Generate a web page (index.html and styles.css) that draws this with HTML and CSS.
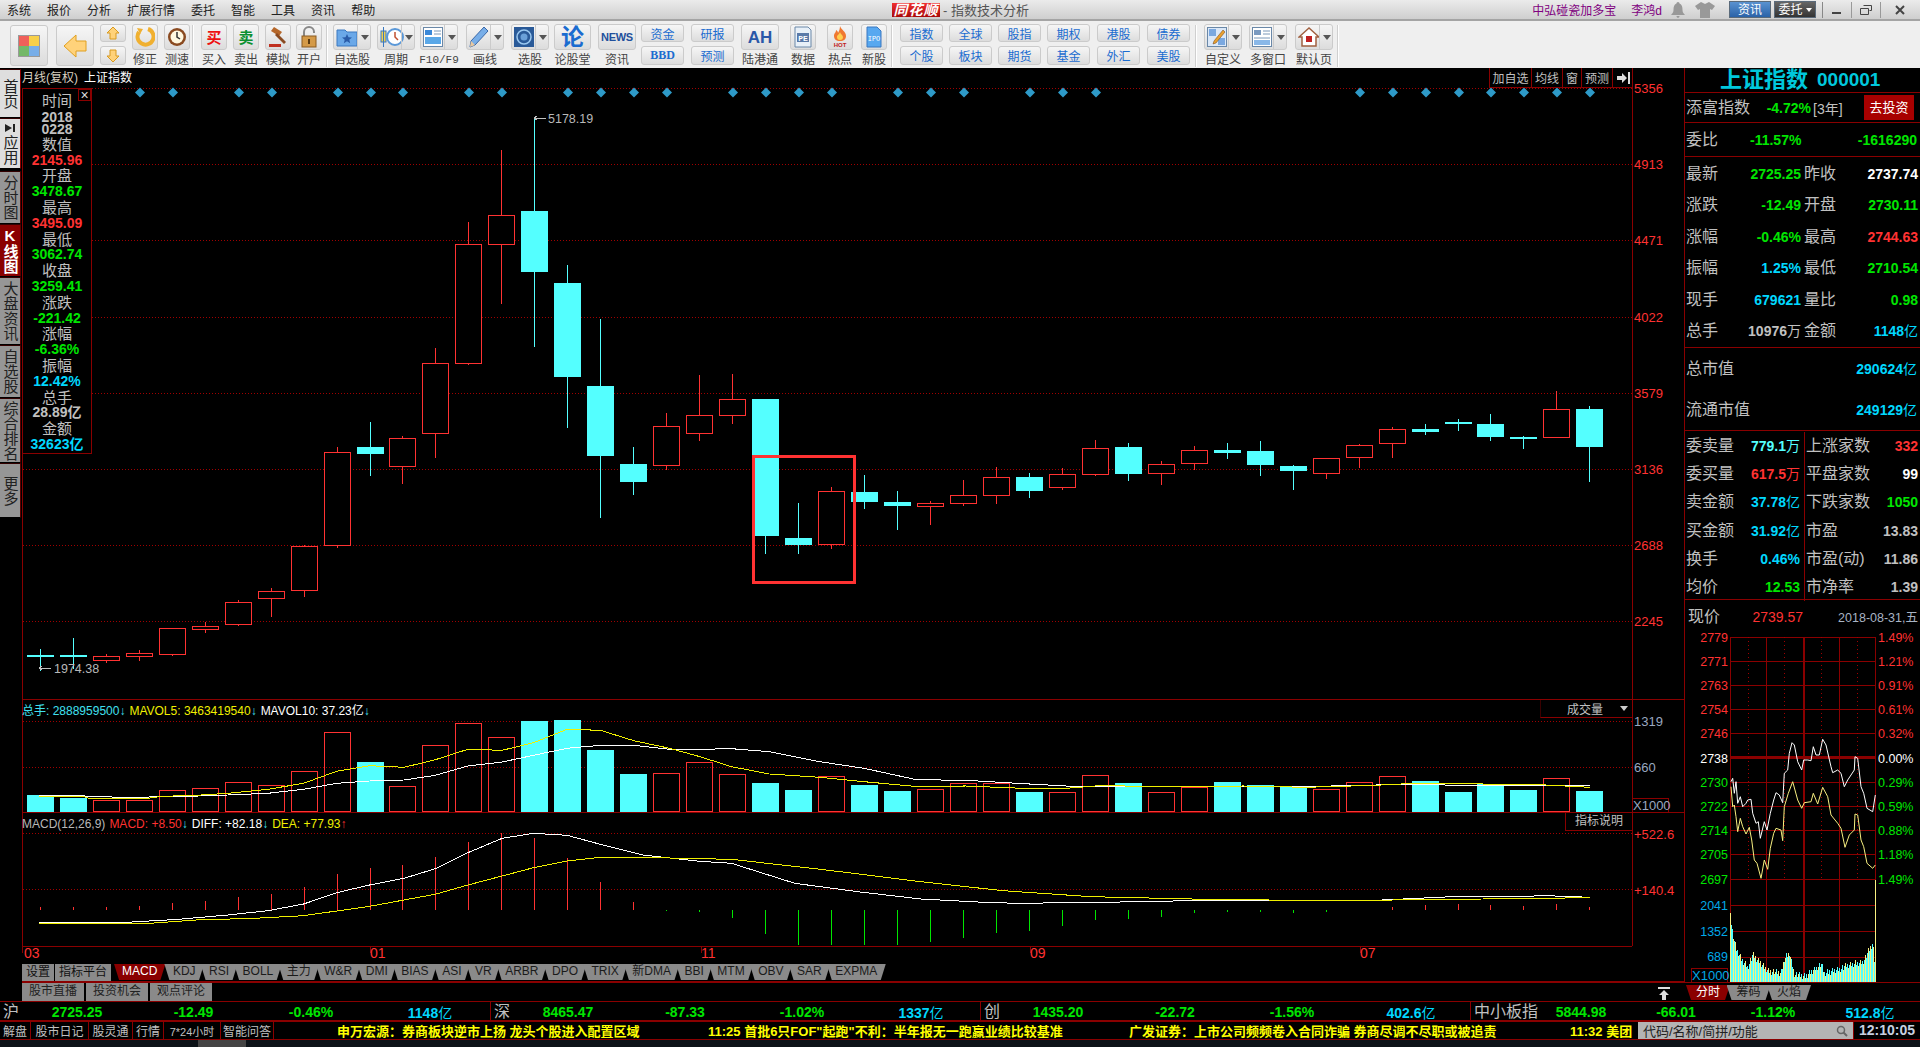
FILE: index.html
```html
<!DOCTYPE html>
<html lang="zh-CN">
<head>
<meta charset="utf-8">
<title>同花顺 - 指数技术分析</title>
<link rel="stylesheet" href="styles.css">
</head>
<body>
<div class="app">
  <header class="titlebar">
    <nav class="menu"><span>系统</span><span>报价</span><span>分析</span><span>扩展行情</span><span>委托</span><span>智能</span><span>工具</span><span>资讯</span><span>帮助</span></nav>
    <div class="brand"><span class="brand-logo">同花顺</span><span class="brand-title">- 指数技术分析</span></div>
    <div class="title-right">
      <span class="purple">中弘碰瓷加多宝</span><span class="purple user">李鸿d</span>
      <svg class="bell" width="14" height="16" viewBox="0 0 14 16"><path d="M7 0c1 0 1.500.8 1.500 1.600C11 2.500 11.500 5 11.500 8c0 2 1 3.500 2.500 5H0c1.500-1.500 2.500-3 2.500-5 0-3 .5-5.500 3-6.400C5.500.8 6 0 7 0zM5.500 14h3c0 1-.7 1.800-1.500 1.800S5.500 15 5.500 14z" fill="#999"/></svg>
      <svg class="shirt" width="20" height="16" viewBox="0 0 20 16"><path d="M6 0l4 2 4-2 6 4-3 4-2-1v9H5V7L3 8 0 4z" fill="#999"/></svg>
      <span class="pill pill-blue">资讯</span><span class="pill pill-dark">委托<i class="caret"></i></span>
      <div class="winbtns">
        <span class="win"><svg width="10" height="10" viewBox="0 0 10 10"><rect x="0" y="7" width="9" height="2" fill="#444"/></svg></span>
        <span class="win"><svg width="12" height="10" viewBox="0 0 12 10"><path d="M3.500.5h8v5h-2M.5 3.500h8v6h-8z" fill="none" stroke="#444"/></svg></span>
        <span class="win win-x"><svg width="10" height="10" viewBox="0 0 10 10"><path d="M1 1l8 8M9 1l-8 8" stroke="#444" stroke-width="2"/></svg></span>
      </div>
    </div>
  </header>

  <div class="toolbar">
    <div class="btn w38 tall ml0"><svg width="22" height="22" viewBox="0 0 22 22"><rect x="1" y="1" width="10" height="10" fill="#f0605a"/><rect x="11" y="1" width="10" height="10" fill="#f8d048"/><rect x="1" y="11" width="10" height="10" fill="#74b868"/><rect x="11" y="11" width="10" height="10" fill="#78aee8"/><rect x=".5" y=".5" width="21" height="21" fill="none" stroke="#999"/></svg></div>
    <div class="btn w38 tall ml8"><svg width="24" height="24" viewBox="0 0 24 24"><path d="M1 12L13 1v6h10v10H13v6z" fill="#ffd27a" stroke="#e0a020"/></svg></div>
    <div class="stack w26 ml6">
      <div class="btn half"><svg width="14" height="14" viewBox="0 0 14 14"><path d="M7 1l6 6H10v6H4V7H1z" fill="#ffd27a" stroke="#d89a20"/></svg></div>
      <div class="btn half"><svg width="14" height="14" viewBox="0 0 14 14"><path d="M7 13L1 7h3V1h6v6h3z" fill="#ffd27a" stroke="#d89a20"/></svg></div>
    </div>
    <div class="tool w26 ml6"><div class="btn icon"><svg width="20" height="20" viewBox="0 0 20 20"><path d="M13 2a8 8 0 1 1-9 3" fill="none" stroke="#f0b030" stroke-width="4"/><path d="M2 1l6 1-3 5z" fill="#f0b030"/></svg></div><span>修正</span></div>
    <div class="tool w26 ml6"><div class="btn icon"><svg width="20" height="20" viewBox="0 0 20 20"><circle cx="10" cy="10" r="9" fill="#8a4a20"/><circle cx="10" cy="10" r="6.500" fill="#fff8e0"/><path d="M10 5v5l3 2" fill="none" stroke="#333" stroke-width="1.500"/></svg></div><span>测速</span></div>
    <div class="sep ml2"></div>
    <div class="tool w26 ml7"><div class="btn icon glyph buy">买</div><span>买入</span></div>
    <div class="tool w26 ml6"><div class="btn icon glyph sell">卖</div><span>卖出</span></div>
    <div class="tool w26 ml6"><div class="btn icon"><svg width="20" height="22" viewBox="0 0 20 22"><path d="M6 1l8 5-3 4-8-5z" fill="#b5672a"/><path d="M9 7l9 9-2 2-9-9z" fill="#8a4a20"/><rect x="1" y="18" width="12" height="3" fill="#c03020"/></svg></div><span>模拟</span></div>
    <div class="tool w26 ml5"><div class="btn icon"><svg width="18" height="22" viewBox="0 0 18 22"><path d="M4 10V6a5 5 0 0 1 10 0v1" fill="none" stroke="#888" stroke-width="2"/><rect x="2" y="10" width="14" height="11" fill="#d49a48" stroke="#8a5a20"/><rect x="8" y="13" width="2" height="5" fill="#5a3a10"/></svg></div><span>开户</span></div>
    <div class="sep ml4"></div>
    <div class="tool w38 ml5"><div class="btn icon split"><svg width="22" height="20" viewBox="0 0 22 20"><path d="M1 3h8l2 2h10v14H1z" fill="#6aa8e8" stroke="#3a78c0"/><path d="M11 7l1.500 3.200 3.500.3-2.700 2.300.9 3.400-3.200-1.900-3.200 1.900.9-3.400L6 10.500l3.500-.3z" fill="#2a5ca8"/></svg><i class="drop"></i></div><span>自选股</span></div>
    <div class="tool w38 ml6"><div class="btn icon split"><svg width="24" height="22" viewBox="0 0 24 22"><rect x="1" y="5" width="5" height="11" fill="#f0d050" stroke="#3a78c0"/><path d="M3.500 1v20" stroke="#3a78c0"/><circle cx="15" cy="11" r="8" fill="#fff" stroke="#5a98d8" stroke-width="2"/><path d="M15 6v5l3 3" fill="none" stroke="#c05030" stroke-width="1.500"/></svg><i class="drop"></i></div><span>周期</span></div>
    <div class="tool w38 ml5"><div class="btn icon split"><svg width="20" height="20" viewBox="0 0 20 20"><rect x=".5" y=".5" width="19" height="19" fill="#fff" stroke="#6a88a8"/><rect x="2" y="3" width="7" height="5" fill="#3a88d8"/><path d="M11 4h7M11 7h7" stroke="#7a98b8"/><rect x="2" y="10" width="16" height="7" fill="#5aa8e8"/></svg><i class="drop"></i></div><span class="mono">F10/F9</span></div>
    <div class="tool w38 ml8"><div class="btn icon split"><svg width="20" height="22" viewBox="0 0 20 22"><path d="M15 1l4 4L6 19l-5 2 1-6z" fill="#78aee8" stroke="#3a68a8"/><path d="M1 21l1-6 4 4z" fill="#e8c8a0"/></svg><i class="drop"></i></div><span>画线</span></div>
    <div class="tool w38 ml7"><div class="btn icon split"><svg width="20" height="20" viewBox="0 0 20 20"><rect width="20" height="20" fill="#2a5a98"/><circle cx="10" cy="10" r="7" fill="none" stroke="#9ac8f0" stroke-width="1.500"/><circle cx="10" cy="10" r="3.500" fill="#6aa0d8"/></svg><i class="drop"></i></div><span>选股</span></div>
    <div class="tool w37 ml5"><div class="btn icon glyph lun">论</div><span>论股堂</span></div>
    <div class="tool w38 ml7"><div class="btn icon glyph news">NEWS</div><span>资讯</span></div>
    <div class="stack w43 ml5"><div class="btn half link">资金</div><div class="btn half link bbd">BBD</div></div>
    <div class="stack w43 ml7"><div class="btn half link">研报</div><div class="btn half link">预测</div></div>
    <div class="tool w38 ml7"><div class="btn icon glyph ah">AH</div><span>陆港通</span></div>
    <div class="tool w26 ml11"><div class="btn icon"><svg width="20" height="22" viewBox="0 0 20 22"><path d="M2 1h13l3 3v17H2z" fill="#e8f0f8" stroke="#6a88a8"/><rect x="4" y="7" width="12" height="9" fill="#5a7aa8"/><text x="10" y="15" class="pe">PE</text></svg></div><span>数据</span></div>
    <div class="tool w26 ml11"><div class="btn icon"><svg width="20" height="22" viewBox="0 0 20 22"><path d="M10 0c1 4 6 5 6 10 0 3-2 5-6 5s-6-2-6-5c0-3 2-3 2-6 1 1 2 1 2 3 1-2 2-4 2-7z" fill="#f07830"/><path d="M10 6c0 2 3 3 3 5s-1 3-3 3-3-1-3-3 2-2 3-5z" fill="#ffd050"/><text x="10" y="21" class="hot">HOT</text></svg></div><span>热点</span></div>
    <div class="tool w26 ml8"><div class="btn icon"><svg width="16" height="22" viewBox="0 0 16 22"><path d="M1 1h10l4 4v16H1z" fill="#58a8f0" stroke="#3a78c0"/><text x="8" y="15" class="ipo">IPO</text></svg></div><span>新股</span></div>
    <div class="sep ml4"></div>
    <div class="stack w43 ml7"><div class="btn half link">指数</div><div class="btn half link">个股</div></div>
    <div class="stack w43 ml6"><div class="btn half link">全球</div><div class="btn half link">板块</div></div>
    <div class="stack w43 ml6"><div class="btn half link">股指</div><div class="btn half link">期货</div></div>
    <div class="stack w43 ml6"><div class="btn half link">期权</div><div class="btn half link">基金</div></div>
    <div class="stack w43 ml7"><div class="btn half link">港股</div><div class="btn half link">外汇</div></div>
    <div class="stack w43 ml7"><div class="btn half link">债券</div><div class="btn half link">美股</div></div>
    <div class="sep ml5"></div>
    <div class="tool w38 ml7"><div class="btn icon split"><svg width="20" height="20" viewBox="0 0 20 20"><rect x=".5" y=".5" width="19" height="19" fill="#dbe8f8" stroke="#6a88a8"/><rect x="2" y="2" width="7" height="7" fill="#7aa8e0"/><rect x="11" y="11" width="7" height="7" fill="#7aa8e0"/><path d="M16 3l2 2-9 11-3 1 1-3z" fill="#e8a030" stroke="#704010" stroke-width=".5"/></svg><i class="drop"></i></div><span>自定义</span></div>
    <div class="tool w38 ml7"><div class="btn icon split"><svg width="20" height="20" viewBox="0 0 20 20"><rect x=".5" y=".5" width="19" height="19" fill="#fff" stroke="#6a88a8"/><rect x="2" y="3" width="7" height="5" fill="#7a9ac0"/><path d="M11 4h7M11 7h7M2 11h16" stroke="#7a98b8"/><rect x="2" y="13" width="16" height="5" fill="#8ab8e8"/></svg><i class="drop"></i></div><span>多窗口</span></div>
    <div class="tool w38 ml8"><div class="btn icon split"><svg width="22" height="20" viewBox="0 0 22 20"><path d="M11 1L1 10h3v9h14v-9h3z" fill="#fff" stroke="#a06040" stroke-width="1.500"/><rect x="8" y="9" width="6" height="6" fill="#c02020"/></svg><i class="drop"></i></div><span>默认页</span></div>
    <div class="sep ml4"></div>
  </div>

  <main class="main">
    <aside class="rail">
      <div class="rail-btn light h49">首页</div>
      <div class="rail-btn light h51"><svg class="rail-icon" width="11" height="10" viewBox="0 0 11 10"><path d="M0 1l7 4-7 4zM8 1h2v8H8z" fill="#222"/></svg>应用</div>
      <div class="rail-btn h53 gap2">分时图</div>
      <div class="rail-btn active h53">K线图</div>
      <div class="rail-btn h68">大盘资讯</div>
      <div class="rail-btn h53">自选股</div>
      <div class="rail-btn h65">综合排名</div>
      <div class="rail-btn h55">更多</div>
    </aside>

    <section class="chart-col">
      <div class="canvas">
        <svg class="chart" width="1662" height="894" viewBox="22 68 1662 894" xmlns="http://www.w3.org/2000/svg">
          <g id="grid"></g>
          <g id="volume"></g>
          <g id="macd"></g>
          <g id="candles"></g>
          <g id="diamonds"></g>
          <rect class="highlight" x="753.500" y="456.500" width="101" height="126"/>
          <path class="peak" d="M534 118h12M537 116l-3 2 3 2M39 668h12M42 666l-3 2 3 2"/>
          <text class="t-gray" x="548" y="123">5178.19</text>
          <text class="t-gray" x="54" y="673">1974.38</text>
          <text class="cap" x="22" y="82"><tspan class="t-soft">月线(复权)</tspan><tspan class="t-white" dx="6">上证指数</tspan></text>

          <text class="ax" x="1634" y="93">5356</text><text class="ax" x="1634" y="169">4913</text><text class="ax" x="1634" y="245">4471</text><text class="ax" x="1634" y="322">4022</text><text class="ax" x="1634" y="398">3579</text><text class="ax" x="1634" y="474">3136</text><text class="ax" x="1634" y="550">2688</text><text class="ax" x="1634" y="626">2245</text>
          <text class="ax ax-blue" x="1634" y="726">1319</text><text class="ax ax-blue" x="1634" y="772">660</text>
          <text class="ax" x="1634" y="839">+522.6</text><text class="ax" x="1634" y="895">+140.4</text>

          <text class="leg" x="22" y="715"><tspan class="t-cyan">总手: 2888959500</tspan><tspan class="t-cyan">↓</tspan><tspan class="t-yellow" dx="4">MAVOL5: 3463419540</tspan><tspan class="t-cyan">↓</tspan><tspan class="t-white" dx="4">MAVOL10: 37.23亿</tspan><tspan class="t-cyan">↓</tspan></text>
          <text class="leg" x="22" y="828"><tspan class="t-gray">MACD(12,26,9)</tspan><tspan class="t-red" dx="4">MACD: +8.50</tspan><tspan class="t-cyan">↓</tspan><tspan class="t-white" dx="4">DIFF: +82.18</tspan><tspan class="t-cyan">↓</tspan><tspan class="t-yellow" dx="4">DEA: +77.93</tspan><tspan class="t-red">↑</tspan></text>

          <text class="xl" x="24" y="958">03</text><text class="xl" x="370" y="958">01</text><text class="xl" x="701" y="958">11</text><text class="xl" x="1030" y="958">09</text><text class="xl" x="1360" y="958">07</text>
        </svg>

        <div class="chart-tools"><span class="ct w42">加自选</span><span class="ct w31">均线</span><span class="ct w19">窗</span><span class="ct w31">预测</span><span class="ct w20"><svg width="13" height="12" viewBox="0 0 13 12"><path d="M0 4h5V1l5 5-5 5V8H0zM11 0h2v12h-2z" fill="#ddd"/></svg></span></div>

        <div class="info-box">
          <span class="info-x">×</span>
          <span class="il">时间</span><b class="iv iv-year gy">2018</b><b class="iv iv-tight gy">0228</b>
          <span class="il">数值</span><b class="iv r">2145.96</b>
          <span class="il">开盘</span><b class="iv g">3478.67</b>
          <span class="il">最高</span><b class="iv r">3495.09</b>
          <span class="il">最低</span><b class="iv g">3062.74</b>
          <span class="il">收盘</span><b class="iv g">3259.41</b>
          <span class="il">涨跌</span><b class="iv g">-221.42</b>
          <span class="il">涨幅</span><b class="iv g">-6.36%</b>
          <span class="il">振幅</span><b class="iv c">12.42%</b>
          <span class="il">总手</span><b class="iv gy">28.89亿</b>
          <span class="il">金额</span><b class="iv c">32623亿</b>
        </div>

        <div class="vol-select">成交量<i class="tri"></i></div>
        <div class="x1000 x1000-main">X1000</div>
        <div class="ind-help">指标说明</div>
      </div>

      <div class="tabs">
        <span class="flat">设置</span><span class="flat">指标平台</span>
        <span class="tab on first">MACD</span><span class="tab">KDJ</span><span class="tab">RSI</span><span class="tab">BOLL</span><span class="tab">主力</span><span class="tab">W&amp;R</span><span class="tab">DMI</span><span class="tab">BIAS</span><span class="tab">ASI</span><span class="tab">VR</span><span class="tab">ARBR</span><span class="tab">DPO</span><span class="tab">TRIX</span><span class="tab">新DMA</span><span class="tab">BBI</span><span class="tab">MTM</span><span class="tab">OBV</span><span class="tab">SAR</span><span class="tab">EXPMA</span>
      </div>
    </section>

    <aside class="side">
      <h1 class="side-title"><span>上证指数</span><b>000001</b></h1>
      <div class="sec tf">
        <span class="lbl">添富指数</span><b class="g tf-val">-4.72%</b><span class="tf-yr">[3年]</span><span class="invest">去投资</span>
      </div>
      <div class="sec wb"><span class="lbl">委比</span><b class="g wb-a">-11.57%</b><b class="g wb-b">-1616290</b></div>
      <div class="sec quad">
        <div class="cell"><span class="lbl">最新</span><b class="g">2725.25</b></div><div class="cell"><span class="lbl">昨收</span><b class="w">2737.74</b></div>
        <div class="cell"><span class="lbl">涨跌</span><b class="g">-12.49</b></div><div class="cell"><span class="lbl">开盘</span><b class="g">2730.11</b></div>
        <div class="cell"><span class="lbl">涨幅</span><b class="g">-0.46%</b></div><div class="cell"><span class="lbl">最高</span><b class="r">2744.63</b></div>
        <div class="cell"><span class="lbl">振幅</span><b class="c">1.25%</b></div><div class="cell"><span class="lbl">最低</span><b class="g">2710.54</b></div>
        <div class="cell"><span class="lbl">现手</span><b class="c">679621</b></div><div class="cell"><span class="lbl">量比</span><b class="g">0.98</b></div>
        <div class="cell"><span class="lbl">总手</span><b class="gy">10976<i>万</i></b></div><div class="cell"><span class="lbl">金额</span><b class="c">1148<i>亿</i></b></div>
      </div>
      <div class="sec caps">
        <div class="capr"><span class="lbl">总市值</span><b class="c">290624<i>亿</i></b></div>
        <div class="capr"><span class="lbl">流通市值</span><b class="c">249129<i>亿</i></b></div>
      </div>
      <div class="sec sgrid">
        <div class="cell"><span class="lbl">委卖量</span><b class="lc">779.1<i>万</i></b></div><div class="cell bl"><span class="lbl">上涨家数</span><b class="r">332</b></div>
        <div class="cell"><span class="lbl">委买量</span><b class="r">617.5<i>万</i></b></div><div class="cell bl"><span class="lbl">平盘家数</span><b class="w">99</b></div>
        <div class="cell"><span class="lbl">卖金额</span><b class="c">37.78<i>亿</i></b></div><div class="cell bl"><span class="lbl">下跌家数</span><b class="g">1050</b></div>
        <div class="cell"><span class="lbl">买金额</span><b class="c">31.92<i>亿</i></b></div><div class="cell bl"><span class="lbl">市盈</span><b class="gy">13.83</b></div>
        <div class="cell"><span class="lbl">换手</span><b class="c">0.46%</b></div><div class="cell bl"><span class="lbl">市盈(动)</span><b class="gy">11.86</b></div>
        <div class="cell"><span class="lbl">均价</span><b class="g">12.53</b></div><div class="cell bl"><span class="lbl">市净率</span><b class="gy">1.39</b></div>
      </div>
      <div class="now"><span class="lbl">现价</span><span class="now-v">2739.57</span><span class="now-d">2018-08-31,五</span></div>
      <svg class="mini" width="236" height="353" viewBox="1684 630 236 353" xmlns="http://www.w3.org/2000/svg">
        <g id="minigrid"></g>
        <g id="minivol"></g>
        <g id="minilines"></g>
        <g class="ml-text">
          <text class="mr" x="1727" y="642">2779</text><text class="mr" x="1727" y="666">2771</text><text class="mr" x="1727" y="690">2763</text><text class="mr" x="1727" y="714">2754</text><text class="mr" x="1727" y="738">2746</text><text class="mw" x="1727" y="763">2738</text><text class="mg" x="1727" y="787">2730</text><text class="mg" x="1727" y="811">2722</text><text class="mg" x="1727" y="835">2714</text><text class="mg" x="1727" y="859">2705</text><text class="mg" x="1727" y="884">2697</text><text class="mb" x="1727" y="910">2041</text><text class="mb" x="1727" y="936">1352</text><text class="mb" x="1727" y="961">689</text>
        </g>
        <g class="mr-text">
          <text class="mr" x="1877" y="642">1.49%</text><text class="mr" x="1877" y="666">1.21%</text><text class="mr" x="1877" y="690">0.91%</text><text class="mr" x="1877" y="714">0.61%</text><text class="mr" x="1877" y="738">0.32%</text><text class="mw" x="1877" y="763">0.00%</text><text class="mg" x="1877" y="787">0.29%</text><text class="mg" x="1877" y="811">0.59%</text><text class="mg" x="1877" y="835">0.88%</text><text class="mg" x="1877" y="859">1.18%</text><text class="mg" x="1877" y="884">1.49%</text>
        </g>
      </svg>
      <div class="x1000 x1000-mini">X1000</div>
    </aside>
  </main>

  <div class="subbar">
    <div class="sub-left"><span class="flat big">股市直播</span><span class="flat big">投资机会</span><span class="flat big">观点评论</span></div>
    <div class="sub-right">
      <svg class="pin" width="12" height="13" viewBox="0 0 12 13"><path d="M0 0h12v2H0zM6 3l5 5H8v5H4V8H1z" fill="#ddd"/></svg>
      <span class="tab on small">分时</span><span class="tab small">筹码</span><span class="tab small">火焰</span>
    </div>
  </div>

  <div class="indexbar">
    <div class="idx idx-a"><span class="lbl">沪</span><b class="g">2725.25</b><b class="g">-12.49</b><b class="g">-0.46%</b><b class="c">1148<i>亿</i></b></div>
    <div class="idx idx-b"><span class="lbl">深</span><b class="g">8465.47</b><b class="g">-87.33</b><b class="g">-1.02%</b><b class="c">1337<i>亿</i></b></div>
    <div class="idx idx-b"><span class="lbl">创</span><b class="g">1435.20</b><b class="g">-22.72</b><b class="g">-1.56%</b><b class="c">402.6<i>亿</i></b></div>
    <div class="idx idx-c"><span class="lbl">中小板指</span><b class="g">5844.98</b><b class="g">-66.01</b><b class="g">-1.12%</b><b class="c">512.8<i>亿</i></b></div>
  </div>

  <footer class="statusbar">
    <span class="st w30">解盘</span><span class="st w58">股市日记</span><span class="st w44">股灵通</span><span class="st w31">行情</span><span class="st w57 sm">7*24小时</span><span class="st w54">智能问答</span>
    <div class="ticker">
      <span class="tk t1">申万宏源：券商板块逆市上扬 龙头个股进入配置区域</span>
      <span class="tk t2">11:25 首批6只FOF"起跑"不利：半年报无一跑赢业绩比较基准</span>
      <span class="tk t3">广发证券：上市公司频频卷入合同诈骗 券商尽调不尽职或被追责</span>
      <span class="tk t4">11:32 美团</span>
    </div>
    <div class="search"><span>代码/名称/简拼/功能</span><svg width="12" height="12" viewBox="0 0 12 12"><circle cx="5" cy="5" r="3.500" fill="none" stroke="#666" stroke-width="1.500"/><path d="M7.500 7.500L11 11" stroke="#666" stroke-width="2"/></svg></div>
    <b class="clock">12:10:05</b>
  </footer>
  <div class="taskbar"><i class="task-thumb"></i></div>
</div>
<script src="app.js"></script>
</body>
</html>
```
FILE: styles.css
```css
* { box-sizing: border-box; }
html, body { margin: 0; padding: 0; background: #000; }
body { font-family: "Liberation Sans", "Noto Sans CJK SC", sans-serif; font-size: 12px; color: #c0c0c0; overflow: hidden; }
.app { width: 1920px; height: 1047px; display: flex; flex-direction: column; overflow: hidden; }
i { font-style: normal; font-weight: 400; }
.g { color: #00e600; } .r { color: #ff3232; } .c { color: #00d8ff; } .w { color: #fff; } .gy { color: #c0c0c0; } .lc { color: #54ffff; }

/* title bar */
.titlebar { height: 21px; flex: none; display: flex; align-items: center; background: linear-gradient(#ebebeb, #cfcfcf); border-bottom: 2px solid #a4a4a4; color: #222; }
.menu { display: flex; padding-left: 7px; width: 892px; flex: none; }
.menu span { margin-right: 16px; }
.brand { display: flex; align-items: center; flex: none; }
.brand-logo { width: 48px; height: 14px; background: linear-gradient(#f03030, #a80808); color: #fff; font-style: italic; font-weight: 700; font-size: 14px; line-height: 14px; text-align: center; letter-spacing: 1px; overflow: hidden; }
.brand-title { margin-left: 3px; font-size: 13px; color: #555; white-space: nowrap; }
.title-right { margin-left: auto; display: flex; align-items: center; }
.purple { color: #800080; white-space: nowrap; }
.user { margin-left: 15px; }
.bell { margin-left: 9px; }
.shirt { margin-left: 10px; }
.pill { height: 17px; width: 42px; margin-left: 14px; line-height: 16px; text-align: center; color: #fff; font-size: 12px; display: flex; align-items: center; justify-content: center; border: 1px solid #5a6a7a; }
.pill-blue { background: linear-gradient(#5a92d0, #2a62a8); }
.pill-dark { background: linear-gradient(#666, #333); margin-left: 3px; }
.caret { margin-left: 3px; border: 3px solid transparent; border-top: 4px solid #fff; border-bottom: 0; }
.winbtns { display: flex; margin-left: 6px; margin-right: 2px; border-left: 1px solid #888; }
.win { width: 29px; height: 16px; display: flex; align-items: center; justify-content: center; border-right: 1px solid #999; }
.win-x { width: 37px; border-right: 0; }

/* toolbar */
.toolbar { height: 47px; flex: none; display: flex; align-items: flex-start; padding: 3px 0 0 10px; background: #efefef; }
.btn { display: flex; align-items: center; justify-content: center; background: linear-gradient(#f6f6f6, #dcdcdc); border: 1px solid #cbcbcb; border-radius: 3px; }
.tall { height: 41px; margin-top: 1px; }
.w26 { width: 26px; flex: none; } .w37 { width: 37px; flex: none; } .w38 { width: 38px; flex: none; } .w43 { width: 43px; flex: none; }
.ml0 { margin-left: 0; } .ml2 { margin-left: 2px; } .ml4 { margin-left: 4px; } .ml5 { margin-left: 5px; } .ml6 { margin-left: 6px; } .ml7 { margin-left: 7px; } .ml8 { margin-left: 8px; } .ml11 { margin-left: 11px; }
.stack { display: flex; flex-direction: column; gap: 4px; }
.half { height: 18px; }
.stack .half + .half { height: 19px; }
.link { color: #1a6cd0; font-size: 12px; }
.bbd { font-family: "Liberation Serif", serif; font-weight: 700; }
.tool { display: flex; flex-direction: column; align-items: center; }
.tool span { margin-top: 3px; line-height: 15px; color: #444; white-space: nowrap; }
.tool .mono { font-family: "Liberation Mono", monospace; font-size: 11px; }
.icon { height: 26px; width: 100%; }
.split { position: relative; justify-content: flex-start; padding-left: 2px; }
.drop { position: absolute; right: 0; top: 0; width: 13px; height: 24px; border-left: 1px solid #cbcbcb; }
.drop::after { content: ""; position: absolute; left: 3px; top: 10px; border: 4px solid transparent; border-top: 5px solid #555; border-bottom: 0; }
.glyph { font-weight: 700; line-height: 1; }
.buy { color: #ee1010; font-size: 15px; }
.sell { color: #0a9030; font-size: 15px; }
.lun { color: #1a6cd0; font-size: 23px; }
.news { color: #22509c; font-size: 11px; letter-spacing: -.3px; }
.ah { color: #2a58a8; font-size: 17px; }
.pe { font: 700 8px "Liberation Mono", monospace; fill: #fff; text-anchor: middle; }
.hot { font: 700 6px "Liberation Sans", sans-serif; fill: #c02020; text-anchor: middle; }
.ipo { font: 400 7px "Liberation Mono", monospace; fill: #fff; text-anchor: middle; }
.sep { width: 2px; height: 42px; flex: none; margin-top: 1px; background: #cfcfcf; border-right: 1px solid #fff; }

/* main */
.main { height: 915px; flex: none; display: flex; background: #000; }
.rail { width: 22px; flex: none; padding-top: 1px; display: flex; flex-direction: column; align-items: stretch; }
.rail-btn { width: 21px; flex: none; writing-mode: vertical-rl; text-orientation: upright; display: flex; align-items: center; justify-content: center; font-size: 15px; line-height: 19px; letter-spacing: 0; color: #222; background: #969696; border-right: 1px solid #5a0000; border-bottom: 1px solid #000; border-top: 1px solid #300; overflow: hidden; }
.rail-btn.light { background: #dedede; border-right: 1px solid #8a0000; }
.rail-btn.active { background: #8a0000; color: #fff; font-weight: 700; }
.rail-icon { margin-bottom: 2px; flex: none; }
.h49 { height: 49px; } .h51 { height: 51px; } .h53 { height: 53px; } .h55 { height: 55px; } .h65 { height: 65px; } .h68 { height: 68px; }
.gap2 { margin-top: 2px; }

.chart-col { width: 1662px; flex: none; display: flex; flex-direction: column; }
.canvas { position: relative; height: 894px; flex: none; }
.chart { display: block; shape-rendering: crispEdges; font-family: "Liberation Sans", "Noto Sans CJK SC", sans-serif; }
.chart text, .mini text { shape-rendering: auto; }
.highlight { fill: none; stroke: #ff3232; stroke-width: 3; }
.peak { fill: none; stroke: #c0c0c0; stroke-width: 1; }
.t-gray { fill: #b8b8b8; } .t-white { fill: #fff; } .t-soft { fill: #d8d0c0; } .t-cyan { fill: #40e0f0; } .t-yellow { fill: #f0f000; } .t-red { fill: #ff3232; }
.chart > .t-gray { font-size: 12.500px; }
.cap { font-size: 12px; }
.ax { fill: #ff3232; font-size: 13px; }
.ax-blue { fill: #9aa8c0; }
.leg { font-size: 12px; }
.xl { fill: #ff3232; font-size: 14px; }

.chart-tools { position: absolute; left: 1467px; top: 0; height: 20px; display: flex; border-left: 1px solid #8a0000; border-bottom: 1px solid #8a0000; }
.ct { display: flex; align-items: center; justify-content: center; border-right: 1px solid #8a0000; color: #c0c0c0; font-size: 12px; white-space: nowrap; }
.w42 { width: 42px; } .w31 { width: 31px; } .w19 { width: 19px; } .w20 { width: 20px; border-right: 0; }

.info-box { position: absolute; left: 0; top: 20px; width: 70px; height: 366px; border: 1px solid #8a0000; background: #000; display: flex; flex-direction: column; align-items: center; padding-top: 4px; }
.info-x { position: absolute; right: 0; top: 0; width: 13px; height: 12px; border: 1px solid #8a0000; color: #ddd; line-height: 10px; text-align: center; font-size: 14px; }
.il { font-size: 15px; line-height: 15.800px; height: 15.800px; color: #c0c0c0; flex: none; }
.iv { font-size: 14px; line-height: 15.800px; height: 15.800px; flex: none; white-space: nowrap; }
.iv-year { line-height: 12px; height: 12px; margin-top: 2px; }
.iv-tight { line-height: 12px; height: 12px; margin-bottom: 2px; }
.iv i { font-size: 14px; }

.vol-select { position: absolute; left: 1518px; top: 632px; width: 92px; height: 18px; border-left: 1px solid #3a0000; border-bottom: 1px solid #8a0000; color: #c0c0c0; display: flex; align-items: center; padding-left: 26px; }
.tri { position: absolute; right: 4px; top: 6px; border: 4px solid transparent; border-top: 5px solid #ccc; border-bottom: 0; }
.x1000 { position: absolute; border: 1px solid #8a0000; color: #9aa8c0; font-size: 13px; line-height: 14px; text-align: center; }
.x1000-main { left: 1610px; top: 730px; width: 37px; height: 15px; }
.ind-help { position: absolute; left: 1543px; top: 745px; width: 67px; height: 18px; border-left: 1px solid #8a0000; border-bottom: 1px solid #8a0000; color: #c0c0c0; text-align: center; line-height: 17px; }

.tabs { height: 19px; margin-top: 2px; display: flex; align-items: flex-start; border-bottom: 2px solid #8a0000; }
.flat { background: #8a8a8a; color: #111; height: 17px; line-height: 16px; text-align: center; white-space: nowrap; flex: none; }
.tabs .flat { padding: 0 4px; margin-right: 1px; }
.tabs .flat + .flat { margin-right: 3px; padding: 0 4px; }
.tab { flex: none; height: 16px; line-height: 15px; padding: 0 8.500px; margin-right: -3.500px; background: #8a8a8a; color: #1a1a1a; font-size: 12px; clip-path: polygon(0 0, 100% 0, calc(100% - 5px) 100%, 5px 100%); white-space: nowrap; }
.tab.on { background: #8a0000; color: #fff; }
.tab.first { padding: 0 8px; margin-right: -1px; }

/* side panel */
.side { position: relative; width: 236px; flex: none; border-left: 1px solid #8a0000; border-bottom: 1px solid #8a0000; display: flex; flex-direction: column; }
.lbl { font-size: 16px; color: #c0c0c0; white-space: nowrap; line-height: 18px; font-weight: 400; }
.side b { font-size: 14px; white-space: nowrap; line-height: 18px; }
.side b i { font-size: 14px; }
.side-title { height: 24px; flex: none; margin: 0 0 0 35px; display: flex; align-items: center; color: #00c8dc; font-weight: 700; font-size: 22px; line-height: 24px; white-space: nowrap; border: 0; }
.side-title b { font-size: 19px; line-height: 24px; margin-left: 9px; color: #00c8dc; letter-spacing: 0; }
.sec { border-top: 1px solid #8a0000; flex: none; }
.tf { height: 30px; display: flex; align-items: center; padding-left: 1px; padding-right: 6px; }
.tf-val { margin-left: 11px; width: 50px; text-align: right; }
.tf-yr { margin-left: 2px; font-size: 14px; color: #c0c0c0; }
.invest { margin-left: auto; width: 50px; height: 25px; background: #a80000; color: #fff; font-size: 13px; line-height: 25px; text-align: center; }
.wb { height: 34px; display: grid; grid-template-columns: 64px 51px 1fr; align-items: center; padding: 0 3px 0 1px; }
.wb-a, .wb-b { text-align: right; }
.quad { height: 191px; display: grid; grid-template-columns: 118px 117px; grid-auto-rows: 1fr; align-items: center; padding: 1px 0 0 1px; }
.cell { display: flex; justify-content: space-between; align-items: center; padding-right: 3px; }
.caps { height: 83px; padding: 0 3px 0 1px; display: grid; grid-auto-rows: 41px; align-items: center; }
.capr { display: flex; justify-content: space-between; align-items: center; }
.sgrid { height: 170px; border-bottom: 1px solid #8a0000; display: grid; grid-template-columns: 118px 117px; grid-auto-rows: 28.200px; padding: 1px 0 0 1px; }
.sgrid .cell { padding-right: 4px; }
.sgrid .bl { border-left: 1px solid #8a0000; padding-left: 1px; padding-right: 3px; }
.now { height: 30px; flex: none; display: grid; grid-template-columns: 34px 81px 1fr; align-items: center; padding: 3px 2px 0 3px; }
.now-v { color: #ff3232; font-size: 14px; text-align: right; }
.now-d { color: #a8b4c4; font-size: 12.500px; text-align: right; white-space: nowrap; }
.mini { display: block; flex: none; shape-rendering: crispEdges; font-size: 12.500px; }
.ml-text text { text-anchor: end; }
.mr { fill: #ff3232; } .mw { fill: #fff; } .mg { fill: #00e600; } .mb { fill: #00a8e8; }
.x1000-mini { left: 6px; top: 900px; width: 37px; height: 15px; color: #00a8e8; font-size: 13px; background: #000; }

/* sub bar */
.subbar { height: 19px; flex: none; display: flex; justify-content: space-between; border-bottom: 1px solid #8a0000; background: #000; }
.sub-left { display: flex; padding-left: 22px; gap: 2px; }
.flat.big { width: 62px; height: 18px; color: #222; line-height: 17px; }
.sub-right { width: 262px; display: flex; align-items: flex-start; padding-top: 2px; position: relative; }
.pin { margin: 2px 16px 0 0; flex: none; }
.small { padding: 0 10px; height: 15px; line-height: 14px; }

/* index bar */
.indexbar { height: 20px; flex: none; display: flex; border-bottom: 2px solid #8a0000; }
.idx { display: grid; align-items: center; height: 18px; border-right: 1px solid #8a0000; white-space: nowrap; }
.idx b { font-size: 14px; text-align: center; } .idx i { font-size: 14px; }
.idx .lbl { line-height: 18px; padding-left: 3px; }
.idx-a { width: 491px; grid-template-columns: 18px 118px 115px 120px 118px; }
.idx-b { width: 490px; grid-template-columns: 18px 118px 116px 118px 120px; }
.idx-c { width: 449px; border-right: 0; grid-template-columns: 60px 100px 90px 104px 90px; }

/* status bar */
.statusbar { height: 18px; flex: none; display: flex; align-items: stretch; border-bottom: 1px solid #8a0000; }
.st { flex: none; display: flex; align-items: center; justify-content: center; border-right: 1px solid #8a0000; color: #c0c0c0; white-space: nowrap; }
.sm { font-size: 11px; }
.w30 { width: 31px; } .w58 { width: 58px; } .w44 { width: 44px; } .w31 { width: 31px; } .w57 { width: 57px; } .w54 { width: 53px; }
.ticker { width: 1364px; flex: none; overflow: hidden; display: flex; align-items: center; border-right: 0; }
.tk { flex: none; color: #ffff00; font-weight: 700; font-size: 13px; white-space: nowrap; }
.t1 { margin-left: 63px; width: 302px; } .t2 { margin-left: 69px; width: 352px; } .t3 { margin-left: 69px; width: 371px; } .t4 { margin-left: 70px; }
.search { width: 215px; flex: none; background: #b4b4b4; color: #222; display: flex; align-items: center; justify-content: space-between; padding: 0 5px; font-size: 13px; }
.clock { flex: 1; text-align: center; color: #c8d0e0; font-size: 14px; line-height: 17px; border-left: 1px solid #8a0000; }

.taskbar { flex: 1; position: relative; background: #0c1218; }
.task-thumb { position: absolute; left: 198px; top: 0; width: 48px; height: 100%; background: #444; }
```
FILE: app.js
```js
(function () {
  var NS = 'http://www.w3.org/2000/svg';
  var RED = '#ff3232', CY = '#54ffff', DR = '#8a0000', GRN = '#00e600';
  function el(parent, name, attrs) {
    var e = document.createElementNS(NS, name);
    for (var k in attrs) e.setAttribute(k, attrs[k]);
    parent.appendChild(e);
    return e;
  }
  function $(id) { return document.getElementById(id); }
  function cx(i) { return Math.round(39.8 + 32.97 * i); }
  function hline(g, x1, x2, y, color, w, dash) {
    var a = { x1: x1, x2: x2, y1: y + 0.5, y2: y + 0.5, stroke: color, 'stroke-width': w || 1 };
    if (dash) a['stroke-dasharray'] = dash;
    el(g, 'line', a);
  }
  function vline(g, x, y1, y2, color, w, dash) {
    var a = { x1: x + 0.5, x2: x + 0.5, y1: y1, y2: y2, stroke: color, 'stroke-width': w || 1 };
    if (dash) a['stroke-dasharray'] = dash;
    el(g, 'line', a);
  }

  /* main grid and frame */
  var grid = $('grid');
  [88, 164, 240, 317, 393, 469, 545, 621, 721, 767, 833, 889].forEach(function (y) {
    hline(grid, 23, 1632, y, '#a00000', 1, '1 2');
  });
  vline(grid, 22, 88, 946, DR);
  vline(grid, 1632, 68, 946, DR);
  hline(grid, 22, 1684, 699, DR);
  hline(grid, 22, 1684, 812, DR);
  hline(grid, 22, 1632, 946, DR);
  [22, 370, 701, 1030, 1360].forEach(function (x) { vline(grid, x, 946, 953, DR); });

  /* candles: type, high, top, bottom, low */
  var C = [
    [0, 649, 655, 657, 670], [0, 638, 655, 657, 668], [1, 654, 656, 660, 662], [1, 650, 653, 656, 660],
    [1, 628, 628, 654, 655], [1, 622, 626, 629, 632], [1, 600, 602, 624, 625], [1, 588, 591, 598, 616],
    [1, 545, 546, 590, 596], [1, 447, 452, 545, 547], [0, 422, 447, 454, 475], [1, 436, 438, 466, 483],
    [1, 348, 363, 433, 457], [1, 222, 244, 363, 364], [1, 150, 215, 244, 303], [0, 118, 211, 272, 346],
    [0, 265, 283, 377, 427], [0, 319, 386, 456, 517], [0, 447, 464, 482, 494], [1, 413, 426, 465, 469],
    [1, 375, 415, 433, 440], [1, 374, 399, 415, 423], [0, 399, 399, 536, 553], [0, 503, 538, 545, 553],
    [1, 487, 491, 544, 548], [0, 475, 492, 502, 508], [0, 491, 502, 506, 529], [1, 501, 503, 506, 524],
    [1, 480, 495, 503, 505], [1, 467, 477, 495, 503], [0, 473, 477, 491, 497], [1, 468, 474, 487, 489],
    [1, 440, 448, 474, 475], [0, 443, 447, 474, 480], [1, 461, 464, 473, 484], [1, 446, 450, 463, 469],
    [0, 443, 450, 453, 458], [0, 441, 451, 465, 475], [0, 465, 466, 471, 489], [1, 458, 458, 473, 478],
    [1, 444, 445, 457, 467], [1, 427, 429, 443, 457], [0, 424, 429, 432, 434], [0, 419, 422, 424, 430],
    [0, 414, 424, 437, 440], [0, 436, 437, 439, 448], [1, 391, 409, 437, 437], [0, 406, 409, 447, 481]
  ];
  var cg = $('candles');
  C.forEach(function (c, i) {
    var x = cx(i), col = c[0] ? RED : CY;
    vline(cg, x, c[1], c[4] + 1, col);
    if (c[0]) {
      el(cg, 'rect', { x: x - 12.5, y: c[2] + 0.5, width: 26, height: c[3] - c[2], fill: '#000', stroke: col, 'stroke-width': 1 });
    } else {
      el(cg, 'rect', { x: x - 13, y: c[2], width: 27, height: Math.max(2, c[3] - c[2]), fill: col });
    }
  });

  /* diamonds */
  var dg = $('diamonds');
  [3, 4, 6, 7, 9, 10, 11, 13, 14, 16, 17, 18, 19, 21, 22, 23, 24, 26, 27, 28, 30, 31, 32, 40, 41, 42, 43, 44, 45, 46, 47].forEach(function (i) {
    var x = cx(i) + 1;
    el(dg, 'polygon', { points: [x, 87.5, x + 5, 92.5, x, 97.5, x - 5, 92.5].join(','), fill: '#2e9ac8', style: 'shape-rendering:auto' });
  });

  /* volume */
  var V = [285, 293, 301, 301, 271, 265, 247, 256, 214, 97, 186, 259, 136, 70, 112, 63, 60, 150, 222, 220, 187,
    223, 249, 270, 229, 255, 273, 268, 250, 250, 276, 277, 226, 249, 277, 262, 246, 256, 262, 268, 247, 229, 243, 276, 252, 270, 235, 273];
  var vg = $('volume');
  V.forEach(function (py, i) {
    var top = Math.round(700 + py / 3), x = cx(i), base = 812;
    if (C[i][0]) {
      el(vg, 'rect', { x: x - 12.5, y: top + 0.5, width: 26, height: base - top - 1, fill: 'none', stroke: RED });
    } else {
      el(vg, 'rect', { x: x - 13, y: top, width: 27, height: base - top, fill: CY });
    }
  });
  function poly(g, a, b, color, w) {
    var pts = a.map(function (p) { return (p[0] / 2.24).toFixed(1) + ',' + (700 + p[1] / 3).toFixed(1); })
      .concat(b.map(function (p) { return (700 + p[0] / 1.584).toFixed(1) + ',' + (700 + p[1] / 3).toFixed(1); }));
    el(g, 'polyline', { points: pts.join(' '), fill: 'none', stroke: color, 'stroke-width': w || 1 });
  }
  poly(vg, [[88, 287], [190, 288], [270, 292], [400, 290], [510, 285], [600, 280], [680, 268], [754, 250], [828, 243], [905, 240], [975, 226], [1048, 198], [1125, 186], [1195, 166], [1270, 145], [1345, 136], [1420, 136], [1500, 148]],
    [[0, 148], [50, 146], [110, 155], [190, 185], [260, 205], [340, 238], [440, 243], [530, 253], [600, 260], [700, 258], [800, 258], [900, 258], [1000, 258], [1120, 253], [1240, 257], [1410, 257]], '#fff');
  poly(vg, [[88, 290], [190, 291], [200, 295], [330, 295], [365, 289], [440, 286], [510, 280], [600, 268], [680, 250], [754, 214], [828, 197], [905, 202], [975, 179], [1048, 148], [1125, 151], [1195, 128], [1270, 88], [1345, 91], [1420, 122], [1500, 145]],
    [[0, 170], [50, 200], [110, 222], [190, 232], [260, 245], [340, 259], [420, 258], [510, 265], [580, 265], [640, 256], [720, 261], [800, 260], [860, 258], [960, 262], [1070, 256], [1120, 251], [1240, 252], [1330, 254], [1410, 262]], '#f0f000');

  /* macd */
  var mg = $('macd');
  var M = [621, 621, 621, 618, 610, 603, 592, 582, 561, 522, 504, 495, 472, 426, 400, 415, 475, 546, 605, 632, 635,
    653, 702, 735, 735, 735, 735, 726, 714, 698, 692, 678, 660, 657, 651, 640, 636, 635, 639, 636, 631,
    622, 615, 612, 615, 618, 612, 622];
  M.forEach(function (py, i) {
    var y = 700 + py / 3, base = 910, red = py < 630;
    vline(mg, cx(i), red ? y : base, red ? base : y, red ? RED : GRN);
  });
  poly(mg, [[88, 668], [270, 668], [400, 658], [510, 645], [600, 632], [680, 612], [754, 578], [828, 555], [905, 535], [975, 506], [1048, 458], [1125, 415], [1195, 400], [1270, 406], [1345, 433], [1440, 465]],
    [[0, 484], [50, 490], [100, 520], [150, 550], [250, 575], [350, 597], [440, 606], [500, 610], [590, 608], [700, 605], [800, 601], [1000, 603], [1070, 601], [1190, 590], [1280, 590], [1340, 587], [1410, 592]], '#fff');
  poly(mg, [[88, 669], [345, 669], [440, 660], [570, 655], [680, 647], [754, 633], [828, 619], [905, 600], [975, 583], [1048, 555], [1125, 528], [1195, 503], [1270, 483], [1345, 472]],
    [[0, 475], [60, 480], [200, 510], [350, 545], [480, 572], [620, 590], [800, 598], [1000, 602], [1240, 597], [1410, 593]], '#f0f000');

  /* mini chart */
  var mgr = $('minigrid');
  [637, 661, 685, 709, 733, 782, 806, 830, 854, 905, 931, 957, 982].forEach(function (y) { hline(mgr, 1729, 1875, y, DR); });
  hline(mgr, 1729, 1875, 757, DR, 3);
  hline(mgr, 1729, 1875, 879, DR, 1);
  [1729, 1765, 1838, 1874].forEach(function (x) { vline(mgr, x, 637, 982, DR); });
  vline(mgr, 1802, 637, 982, DR, 2);
  [1747, 1783, 1820, 1856].forEach(function (x) { vline(mgr, x, 637, 879, '#a00000', 1, '1 3'); });
  vline(mgr, 1919, 880, 982, DR);

  var prof = [[148, 850], [155, 900], [165, 945], [180, 975], [200, 1000], [215, 965], [240, 990], [260, 1010], [300, 1020], [310, 975], [325, 958], [340, 1020], [372, 1030], [420, 990], [430, 1020], [490, 1000], [520, 990], [545, 985], [575, 930], [582, 1000]];
  function topAt(px) {
    for (var j = 1; j < prof.length; j++) {
      if (px <= prof[j][0]) {
        var a = prof[j - 1], b = prof[j];
        return a[1] + (b[1] - a[1]) * (px - a[0]) / (b[0] - a[0]);
      }
    }
    return 1000;
  }
  var mv = $('minivol');
  for (var k = 0; k < 145; k++) {
    var px = 148 + k * 3, h = topAt(px) + ((k * 37) % 23), y0 = 630 + h / 3;
    vline(mv, 1729 + k, y0, 982, (k * 7) % 5 < 2 ? '#f8f080' : CY);
  }
  vline(mv, 1874, 880, 982, '#f8f080');

  function mini(pts, color) {
    el($('minilines'), 'polyline', {
      points: pts.map(function (p) { return (1680 + p[0] / 3).toFixed(1) + ',' + (630 + p[1] / 3).toFixed(1); }).join(' '),
      fill: 'none', stroke: color, 'stroke-width': 1, style: 'shape-rendering:auto'
    });
  }
  mini([[150, 455], [155, 445], [160, 490], [165, 455], [170, 520], [178, 500], [185, 530], [195, 520], [200, 510], [210, 508], [215, 550], [225, 580], [232, 575], [238, 625], [250, 575], [258, 600], [268, 550], [278, 510], [285, 488], [295, 495], [305, 518], [310, 430], [320, 420], [325, 370], [333, 338], [340, 345], [350, 395], [362, 420], [368, 390], [380, 390], [390, 392], [397, 350], [405, 375], [415, 375], [425, 328], [435, 345], [450, 410], [455, 428], [470, 420], [480, 430], [490, 470], [500, 450], [520, 420], [522, 380], [530, 385], [540, 470], [548, 490], [558, 535], [575, 545], [583, 495]], '#fff');
  mini([[150, 470], [155, 530], [160, 525], [165, 560], [170, 605], [178, 565], [185, 590], [195, 612], [205, 592], [212, 630], [220, 690], [228, 700], [240, 745], [250, 690], [260, 718], [268, 655], [278, 610], [285, 595], [300, 600], [305, 632], [310, 530], [322, 490], [335, 455], [350, 510], [362, 535], [370, 518], [390, 515], [397, 490], [410, 522], [425, 472], [440, 500], [450, 555], [470, 580], [480, 595], [492, 652], [505, 615], [520, 600], [522, 552], [530, 555], [540, 630], [548, 650], [558, 700], [575, 715], [583, 705]], '#f8f080');
})();
```
